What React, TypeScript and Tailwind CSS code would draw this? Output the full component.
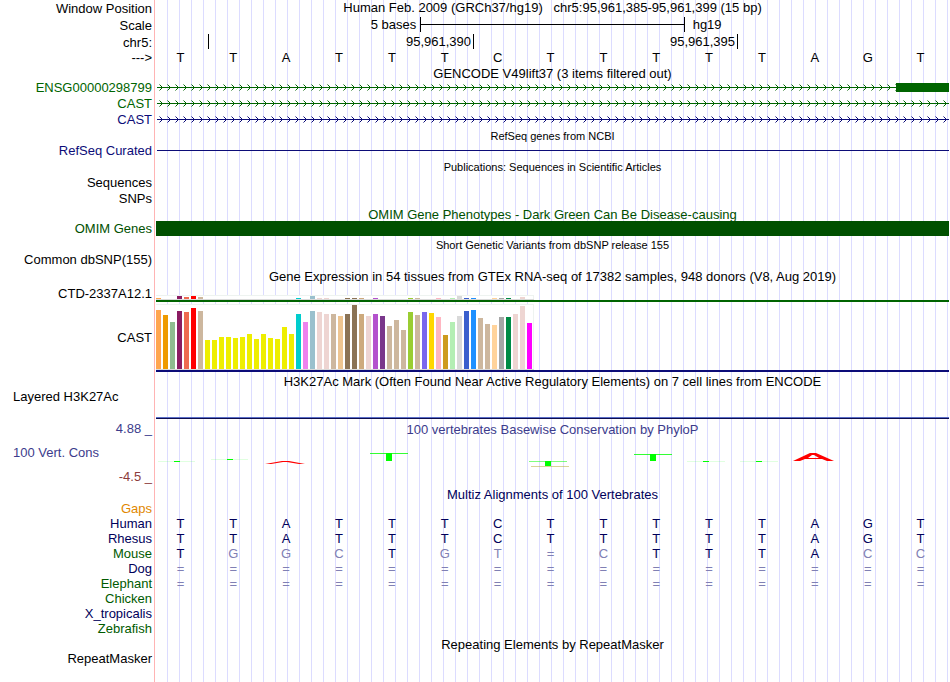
import type { ReactNode } from "react";

const BASES = "TTATTTCTTTTTAGT";

// [color, height in px] for each of the 54 GTEx tissues
const TISSUES: [string, number][] = [
  ["#ffa54f", 59], ["#ee9a00", 54], ["#8fbc8f", 47], ["#8b1c62", 58], ["#ee6a50", 57], ["#ff0000", 61],
  ["#cdb79e", 58], ["#eeee00", 29], ["#eeee00", 29], ["#eeee00", 32], ["#eeee00", 32], ["#eeee00", 31],
  ["#eeee00", 32], ["#eeee00", 35], ["#eeee00", 30], ["#eeee00", 35], ["#eeee00", 31], ["#eeee00", 30],
  ["#eeee00", 42], ["#eeee00", 35], ["#00cdcd", 55], ["#ee82ee", 47], ["#9ac0cd", 58], ["#eed5d2", 57],
  ["#eed5d2", 55], ["#cdb79e", 55], ["#eec591", 53], ["#8b7355", 55], ["#8b7355", 64], ["#cdaa7d", 55],
  ["#eed5d2", 53], ["#b452cd", 55], ["#7a378b", 53], ["#cdb79e", 43], ["#cdb79e", 49], ["#cdb79e", 39],
  ["#9acd32", 57], ["#cdb79e", 54], ["#7a67ee", 57], ["#ffd700", 56], ["#ffb6c1", 52], ["#cd9b1d", 34],
  ["#b4eeb4", 47], ["#d9d9d9", 53], ["#3a5fcd", 58], ["#1e90ff", 59], ["#cdb79e", 51], ["#cdb79e", 45],
  ["#ffd39b", 44], ["#a6a6a6", 52], ["#008b45", 52], ["#eed5d2", 55], ["#eed5d2", 63], ["#ff00ff", 46],
];

const CTD_HEIGHTS = [
  1, 0, 0, 3, 2, 3, 2, 0, 0, 0, 0, 0, 0, 0, 0, 0, 0, 0, 0, 0, 1, 0, 3, 1, 1, 0, 0, 1, 1, 1, 0, 1, 0, 0, 0, 0,
  1, 1, 0, 0, 1, 0, 1, 3, 1, 1, 0, 0, 1, 1, 1, 0, 2, 0,
];

const SPECIES = [
  { name: "Gaps", color: "text-[#e18700]", seq: "" },
  { name: "Human", color: "text-[#00005a]", seq: BASES },
  { name: "Rhesus", color: "text-[#00005a]", seq: BASES },
  { name: "Mouse", color: "text-[#005a00]", seq: "TggcTgt=cTTTAcc" },
  { name: "Dog", color: "text-[#00005a]", seq: "===============" },
  { name: "Elephant", color: "text-[#005a00]", seq: "===============" },
  { name: "Chicken", color: "text-[#005a00]", seq: "" },
  { name: "X_tropicalis", color: "text-[#00005a]", seq: "" },
  { name: "Zebrafish", color: "text-[#005a00]", seq: "" },
];

type RowProps = {
  label?: ReactNode;
  height?: string;
  color?: string;
  align?: string;
  children?: ReactNode;
};

// one line of the browser: label on the left, guide lines and track on the right
const Row = ({ label, height = "h-[15px]", color = "text-black", align = "justify-end", children }: RowProps) => {
  return (
    <div className={`flex ${height}`}>
      <div className={`flex w-[154px] shrink-0 items-center pr-0.5 whitespace-pre ${align} ${color}`}>{label}</div>
      <div className="min-w-0 flex-1 border-l border-[#ffb4b4] bg-[linear-gradient(to_right,transparent_11px,#dcdcff_11px)] bg-[length:12px_100%] bg-clip-content bg-origin-content pl-px">
        {children}
      </div>
    </div>
  );
};

const Title = ({ children, color = "text-black", size = "text-[13px]" }: { children: ReactNode; color?: string; size?: string }) => {
  return (
    <h2 className={`flex h-full items-center justify-center pt-0.5 pr-px whitespace-pre ${color} ${size}`}>
      {children}
    </h2>
  );
};

const Letters = ({ seq }: { seq: string }) => {
  return (
    <div className="mr-[3px] -ml-0.5 grid h-full grid-cols-15 items-center text-center">
      {seq.split("").map((base, i) => (
        <span key={i} className={/[A-Z]/.test(base) ? "" : "text-[#8080b4]"}>
          {base.toUpperCase()}
        </span>
      ))}
    </div>
  );
};

const Arrows = ({ id, color, exon }: { id: string; color: string; exon?: boolean }) => {
  return (
    <div className="flex h-full items-start pr-px">
      <svg className="h-[16px] min-w-0 flex-1" shapeRendering="crispEdges">
        <defs>
          <pattern id={id} width="8" height="16" patternUnits="userSpaceOnUse">
            <path d="M4 6h1v1h-1zM5 7h1v1h-1zM6 8h1v1h-1zM5 9h1v1h-1zM4 10h1v1h-1z" fill={color} />
            <path d="M3 5h1v1h-1zM3 11h1v1h-1z" fill={color} opacity="0.5" />
          </pattern>
        </defs>
        <rect width="100%" height="16" fill={`url(#${id})`} />
        <rect x="1" y="8" width="100%" height="1" fill={color} />
      </svg>
      {exon && <div className="mt-1 h-[9px] w-[53px] bg-[#006400]" />}
    </div>
  );
};

const Expression = ({ heights, box, base }: { heights: number[]; box: string; base: string }) => {
  return (
    <div className="flex h-full flex-col justify-end pr-px">
      <div className={`flex w-[378px] items-end gap-0.5 border-t border-r border-[#eef3f0] bg-white ${box}`}>
        {heights.map((h, i) => (
          <div key={i} className="w-[5px] shrink-0" style={{ height: h, background: TISSUES[i][0] }} />
        ))}
      </div>
      <div className="h-px w-[378px] bg-[#d9d9d9]" />
      <div className={`h-0.5 ${base}`} />
    </div>
  );
};

// x positions follow the 53px base columns
const Conservation = () => {
  return (
    <svg className="mt-1 block h-[26px] w-full" shapeRendering="crispEdges">
      <g fill="#00ff00">
        <rect x="2" y="20" width="37" height="1" opacity="0.12" />
        <rect x="18" y="20" width="6" height="1" />
        <rect x="55" y="18" width="37" height="1" opacity="0.12" />
        <rect x="71" y="18" width="6" height="1" />
        <rect x="214" y="12" width="38" height="1" opacity="0.8" />
        <rect x="230" y="12" width="6" height="8" />
        <rect x="373" y="20" width="38" height="1" opacity="0.5" />
        <rect x="389" y="20" width="6" height="5" />
        <rect x="478" y="13" width="38" height="1" opacity="0.8" />
        <rect x="494" y="13" width="6" height="7" />
        <rect x="531" y="20" width="38" height="1" opacity="0.12" />
        <rect x="547" y="20" width="6" height="1" />
        <rect x="584" y="20" width="38" height="1" opacity="0.12" />
        <rect x="600" y="20" width="6" height="1" />
      </g>
      <rect x="375" y="25" width="38" height="1" fill="#b4aa32" opacity="0.5" />
      <g fill="#ff0000" shapeRendering="auto">
        <path d="M109 23L126 20H133L149 23H143L131 21H127L115 23Z" />
        <path d="M637 20L654 12H660L678 20H671L666 18H649L644 20ZM652 17H663L658 14H656Z" fillRule="evenodd" />
      </g>
    </svg>
  );
};

export default function App() {
  return (
    <main className="flex min-h-screen flex-col overflow-hidden bg-white font-['Liberation_Sans',Arial,sans-serif] text-[13px] leading-[15px] text-black">
      <Row label="Window Position" height="h-[17px]">
        <h1 className="pr-px text-center whitespace-pre">
          Human Feb. 2009 (GRCh37/hg19){"   "}chr5:95,961,385-95,961,399 (15 bp)
        </h1>
      </Row>
      <Row label="Scale" height="h-[17px]">
        <div className="grid h-full grid-cols-3 pr-px">
          <span className="pr-1 text-right">5 bases</span>
          <div className="flex h-[15px] items-center border-x border-black">
            <div className="h-px w-full bg-black" />
          </div>
          <span className="pl-2">hg19</span>
        </div>
      </Row>
      <Row label="chr5:" height="h-[16px]">
        <div className="grid h-full grid-cols-[53fr_265fr_264fr_211fr] pr-px">
          <span className="h-[15px] border-r border-black" />
          <span className="h-[15px] border-r border-black pr-0.5 text-right">95,961,390</span>
          <span className="h-[15px] border-r border-black pr-0.5 text-right">95,961,395</span>
        </div>
      </Row>
      <Row label="--->">
        <Letters seq={BASES} />
      </Row>

      <Row height="h-[14px]">
        <Title>GENCODE V49lift37 (3 items filtered out)</Title>
      </Row>
      <Row label="ENSG00000298799" height="h-[16px]" color="text-[#006400]">
        <Arrows id="ensg" color="#006400" exon />
      </Row>
      <Row label="CAST" height="h-[16px]" color="text-[#006400]">
        <Arrows id="cast-a" color="#006400" />
      </Row>
      <Row label="CAST" height="h-[16px]" color="text-[#0c0c78]">
        <Arrows id="cast-b" color="#0c0c78" />
      </Row>

      <Row height="h-[16px]">
        <Title size="text-[11px]">RefSeq genes from NCBI</Title>
      </Row>
      <Row label="RefSeq Curated" color="text-[#0c0c78]">
        <div className="flex h-full items-center px-px">
          <div className="h-px w-full bg-[#0c0c78]" />
        </div>
      </Row>

      <Row height="h-[16px]">
        <Title size="text-[11px]">Publications: Sequences in Scientific Articles</Title>
      </Row>
      <Row label="Sequences" height="h-[16px]" />
      <Row label="SNPs" height="h-[16px]" />

      <Row>
        <Title color="text-[#005000]">OMIM Gene Phenotypes - Dark Green Can Be Disease-causing</Title>
      </Row>
      <Row label="OMIM Genes" color="text-[#005000]">
        <div className="mr-px h-full bg-[#005000]" />
      </Row>

      <Row height="h-[16px]">
        <Title size="text-[11px]">Short Genetic Variants from dbSNP release 155</Title>
      </Row>
      <Row label="Common dbSNP(155)" />

      <Row height="h-[17px]">
        <Title>Gene Expression in 54 tissues from GTEx RNA-seq of 17382 samples, 948 donors (V8, Aug 2019)</Title>
      </Row>
      <Row label="CTD-2337A12.1" height="h-[18px]">
        <Expression heights={CTD_HEIGHTS} box="h-[4px]" base="bg-[#006400]" />
      </Row>
      <Row label="CAST" height="h-[70px]">
        <Expression heights={TISSUES.map((t) => t[1])} box="h-[65px]" base="bg-[#0c0c78]" />
      </Row>

      <Row height="h-[17px]">
        <Title>H3K27Ac Mark (Often Found Near Active Regulatory Elements) on 7 cell lines from ENCODE</Title>
      </Row>
      <Row label="Layered H3K27Ac" align="justify-start pl-[13px]" />
      <Row>
        <div className="flex h-full flex-col justify-end pr-px">
          <div className="h-px bg-[#5a6ec8]" />
          <div className="h-px bg-[#0c0c50]" />
        </div>
      </Row>

      <Row label="4.88 _" height="h-[18px]" color="text-[#3c3c8c]">
        <Title color="text-[#3c3c8c]">100 vertebrates Basewise Conservation by PhyloP</Title>
      </Row>
      <Row label="100 Vert. Cons" height="h-[30px]" color="text-[#3c3c8c]" align="justify-start pl-[13px]">
        <Conservation />
      </Row>
      <Row label="-4.5 _" height="h-[19px]" color="text-[#8c3c3c]" />

      <Row>
        <Title color="text-[#00005a]">Multiz Alignments of 100 Vertebrates</Title>
      </Row>
      {SPECIES.map(({ name, color, seq }) => (
        <Row key={name} label={name} color={color}>
          <div className="h-full text-[#00005a]">
            <Letters seq={seq} />
          </div>
        </Row>
      ))}

      <Row>
        <Title>Repeating Elements by RepeatMasker</Title>
      </Row>
      <Row label="RepeatMasker" />
      <Row height="flex-1" />
    </main>
  );
}
